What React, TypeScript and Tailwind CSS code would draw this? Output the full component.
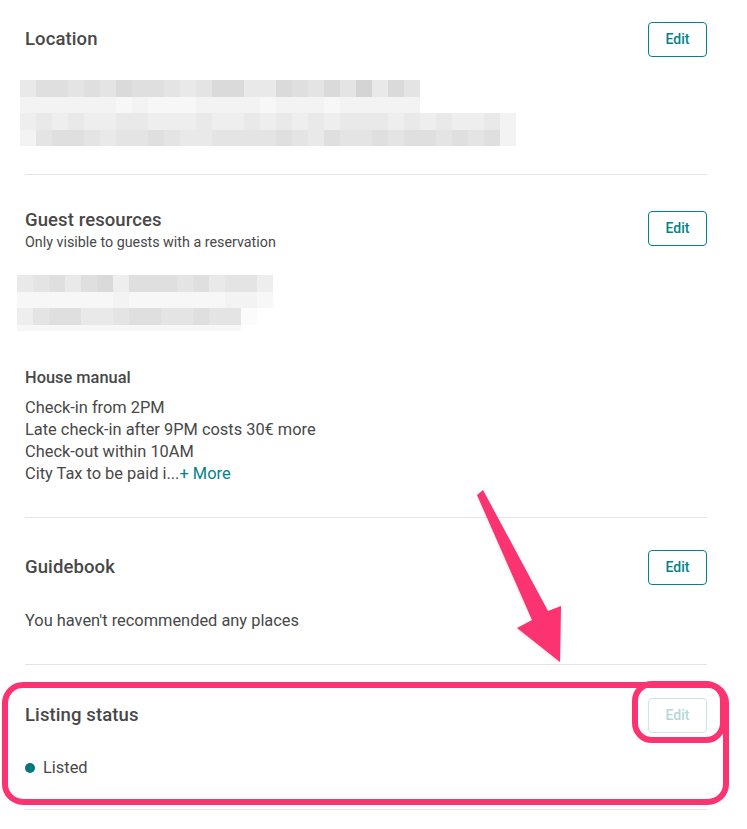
import React from "react";

const shades: Record<string, string> = {
  "1": "bg-[#d4d4d4]",
  "2": "bg-[#dadada]",
  "3": "bg-[#dfdfdf]",
  "4": "bg-[#e4e4e4]",
  "5": "bg-[#e9e9e9]",
  "6": "bg-[#eeeeee]",
  "7": "bg-[#f3f3f3]",
  "8": "bg-[#f7f7f7]",
  "9": "bg-[#fbfbfb]",
};

function Mosaic({ rows, className }: { rows: { cells: string; h: string }[]; className?: string }) {
  return (
    <div className={className}>
      {rows.map((row, i) => (
        <div key={i} className={`flex ${row.h}`}>
          {row.cells.split("").map((c, j) => (
            <div key={j} className={`w-4 h-full ${shades[c]}`} />
          ))}
        </div>
      ))}
    </div>
  );
}

function EditButton({ disabled }: { disabled?: boolean }) {
  return (
    <button
      className={
        disabled
          ? "w-[59px] h-[35px] rounded-[4px] border border-[#cde5e6] text-[#b3d8da] text-[14px] font-medium"
          : "w-[59px] h-[35px] rounded-[4px] border border-[#008489] text-[#008489] text-[14px] font-medium"
      }
    >
      Edit
    </button>
  );
}

export default function App() {
  return (
    <div className="relative w-[747px] h-[829px] overflow-hidden bg-white text-[#484848] font-['Roboto',sans-serif]">
      <div className="pl-[25px] pr-[40px]">
        {/* Location */}
        <section className="pt-[22px] pb-[28px] border-b border-[#e4e4e4]">
          <div className="flex items-center justify-between h-[35px]">
            <h2 className="text-[18.5px] font-medium tracking-[0.1px]">Location</h2>
            <EditButton />
          </div>
          <Mosaic
            className="mt-[23px] -ml-[5px]"
            rows={[
              { cells: "5334342334542255234241524", h: "h-[17px]" },
              { cells: "7777778788877778777877777", h: "h-4" },
              { cells: "6565665566656656565655565656657", h: "h-[17px]" },
              { cells: "7433454434554444345344343343437", h: "h-4" },
            ]}
          />
        </section>

        {/* Guest resources */}
        <section className="pt-[33px] pb-[32px] border-b border-[#e4e4e4]">
          <div className="flex items-start justify-between">
            <div>
              <h2 className="text-[18.5px] leading-[24px] font-medium tracking-[0.1px]">Guest resources</h2>
              <p className="text-[14.3px] leading-[20px]">Only visible to guests with a reservation</p>
            </div>
            <div className="mt-[3px]">
              <EditButton />
            </div>
          </div>
          <Mosaic
            className="mt-[23px] -ml-[8px]"
            rows={[
              { cells: "5435326333435446", h: "h-[17px]" },
              { cells: "8888887888888778", h: "h-4" },
              { cells: "643355433443449", h: "h-[17px]" },
              { cells: "88888888888888", h: "h-[6px]" },
            ]}
          />
          <h3 className="mt-[36px] text-[16.4px] leading-[22px] font-medium">House manual</h3>
          <div className="mt-2 text-[16.4px] leading-[22px]">
            <p>Check-in from 2PM</p>
            <p>Late check-in after 9PM costs 30€ more</p>
            <p>Check-out within 10AM</p>
            <p>
              City Tax to be paid i...<span className="text-[#008489]">+ More</span>
            </p>
          </div>
        </section>

        {/* Guidebook */}
        <section className="pt-[32px] pb-[32px] border-b border-[#e4e4e4]">
          <div className="flex items-center justify-between h-[35px]">
            <h2 className="text-[18.5px] font-medium tracking-[0.1px]">Guidebook</h2>
            <EditButton />
          </div>
          <p className="mt-[25px] text-[16.4px] leading-[22px]">You haven't recommended any places</p>
        </section>

        {/* Listing status */}
        <section className="pt-[33px] pb-[30px] border-b border-[#e4e4e4]">
          <div className="flex items-center justify-between h-[35px]">
            <h2 className="text-[18.5px] font-medium tracking-[0.1px]">Listing status</h2>
            <EditButton disabled />
          </div>
          <div className="mt-[24px] flex items-center gap-[8px] text-[16.4px] leading-[22px]">
            <span className="w-[10px] h-[10px] rounded-full bg-[#00787f]" />
            <span>Listed</span>
          </div>
        </section>
      </div>

      {/* annotation overlay */}
      <svg className="absolute left-0 top-0 pointer-events-none" width="747" height="829" viewBox="0 0 747 829">
        <g fill="#fb3370" style={{ filter: "drop-shadow(0 1px 1px rgba(0,0,0,0.15))" }}>
          <polygon points="477,495 483,490 548,611 561,606 560,662 517,628 532,620" />
        </g>
        <g fill="none" stroke="#fb3370" strokeWidth="6">
          <rect x="5" y="685" width="721" height="117" rx="18" />
          <rect x="635" y="684" width="88" height="56" rx="17" />
        </g>
      </svg>
    </div>
  );
}
